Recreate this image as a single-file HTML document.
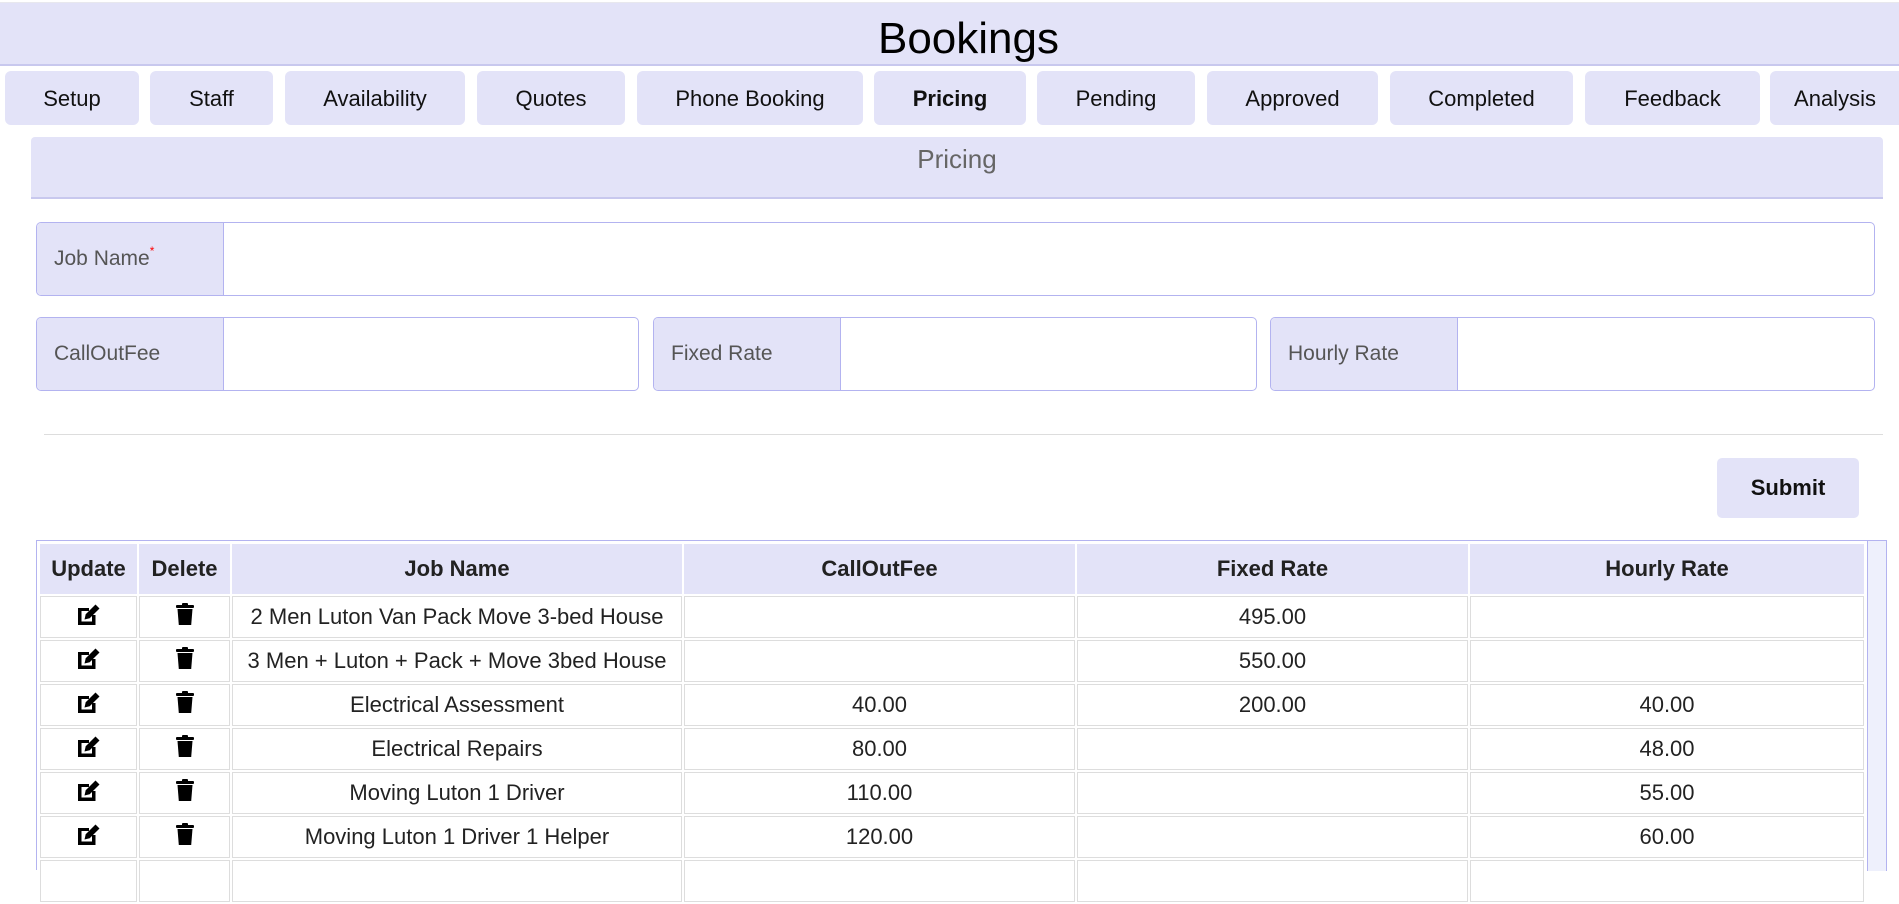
<!DOCTYPE html>
<html><head><meta charset="utf-8"><style>
*{box-sizing:border-box;margin:0;padding:0}
body{width:1899px;height:863px;overflow:hidden;background:#fff;font-family:"Liberation Sans",Arial,sans-serif;position:relative;color:#222}
.hdr{position:absolute;left:0;top:2px;width:1899px;height:64px;background:#e3e3f8;border-bottom:2px solid #c8c8ee;text-align:center;font-size:44px;line-height:72px;color:#000;border-top:1px solid #e8e8ee;padding-left:38px}
.tab{position:absolute;top:71px;height:54px;background:#e3e3f8;border-radius:6px;text-align:center;line-height:56px;font-size:22px;color:#111}
.panel{position:absolute;left:31px;top:137px;width:1852px;height:62px;background:#e3e3f8;border-bottom:2px solid #c8c8ee;text-align:center;font-size:26px;line-height:44px;color:#666;border-radius:4px 4px 0 0}
.grp{position:absolute;border:1.5px solid #b3b3f0;border-radius:5px;overflow:hidden;background:#fff}
.grp .lb{position:absolute;left:0;top:0;bottom:0;width:187px;background:#e3e3f8;border-right:1.5px solid #b3b3f0;font-size:21px;color:#555;padding-left:17px;display:flex;align-items:center}
.hr{position:absolute;left:44px;top:434px;width:1839px;height:1px;background:#ddd}
.btn{position:absolute;left:1717px;top:458px;width:142px;height:60px;background:#e3e3f8;border-radius:5px;text-align:center;line-height:60px;font-size:22px;font-weight:bold;color:#111}
.tw{position:absolute;left:36px;top:540px;width:1851px;height:330px;border:1.5px solid #b3b3f0;border-bottom:none;border-right:none}
.sb{position:absolute;left:1867px;top:541px;width:20px;height:330px;background:#eef0fc;border-left:1.5px solid #b3b3f0;border-right:1.5px solid #b3b3f0}
table{position:absolute;left:38px;top:542px;border-collapse:separate;border-spacing:2px;font-size:22px}
td,th{border:1.5px solid #ddd;text-align:center;height:42px;padding:0}
th{background:#e3e3f8;border-color:#e3e3f8;height:50px;font-weight:bold;color:#222}
td{color:#222}
td svg{display:block;margin:0 auto;position:relative;top:-3px}
</style></head><body>
<div class="hdr">Bookings</div>
<div class="tab" style="left:5px;width:134px">Setup</div>
<div class="tab" style="left:150px;width:123px">Staff</div>
<div class="tab" style="left:285px;width:180px">Availability</div>
<div class="tab" style="left:477px;width:148px">Quotes</div>
<div class="tab" style="left:637px;width:226px">Phone Booking</div>
<div class="tab" style="left:874px;width:152px;font-weight:bold">Pricing</div>
<div class="tab" style="left:1037px;width:158px">Pending</div>
<div class="tab" style="left:1207px;width:171px">Approved</div>
<div class="tab" style="left:1390px;width:183px">Completed</div>
<div class="tab" style="left:1585px;width:175px">Feedback</div>
<div class="tab" style="left:1770px;width:140px;padding-right:10px">Analysis</div>
<div class="panel">Pricing</div>
<div class="grp" style="left:36px;top:222px;width:1839px;height:74px"><div class="lb">Job Name<sup style="color:red;font-size:12px;position:relative;top:-8px">*</sup></div></div>
<div class="grp" style="left:36px;top:317px;width:603px;height:74px"><div class="lb">CallOutFee</div></div>
<div class="grp" style="left:653px;top:317px;width:604px;height:74px"><div class="lb">Fixed Rate</div></div>
<div class="grp" style="left:1270px;top:317px;width:605px;height:74px"><div class="lb">Hourly Rate</div></div>
<div class="hr"></div>
<div class="btn">Submit</div>
<div class="tw"></div>
<div class="sb"></div>
<table>
<colgroup><col style="width:97px"><col style="width:91px"><col style="width:450px"><col style="width:391px"><col style="width:391px"><col style="width:394px"></colgroup>
<tr><th>Update</th><th>Delete</th><th>Job Name</th><th>CallOutFee</th><th>Fixed Rate</th><th>Hourly Rate</th></tr>
<tr><td>E</td><td>T</td><td>2 Men Luton Van Pack Move 3-bed House</td><td></td><td>495.00</td><td></td></tr>
<tr><td>E</td><td>T</td><td>3 Men + Luton + Pack + Move 3bed House</td><td></td><td>550.00</td><td></td></tr>
<tr><td>E</td><td>T</td><td>Electrical Assessment</td><td>40.00</td><td>200.00</td><td>40.00</td></tr>
<tr><td>E</td><td>T</td><td>Electrical Repairs</td><td>80.00</td><td></td><td>48.00</td></tr>
<tr><td>E</td><td>T</td><td>Moving Luton 1 Driver</td><td>110.00</td><td></td><td>55.00</td></tr>
<tr><td>E</td><td>T</td><td>Moving Luton 1 Driver 1 Helper</td><td>120.00</td><td></td><td>60.00</td></tr>
<tr><td></td><td></td><td></td><td></td><td></td><td></td></tr>
</table>
<script>
var e='<svg width="26" height="22" viewBox="0 0 26 22"><path d="M2 5h11v3H5.5v10.5H16V12h3.5v10H2z" fill="#000"/><path d="M8.5 16.5l1.2-5.2L19.5 1.5l4 4-9.8 9.8z" fill="#000"/></svg>';
var t='<svg width="20" height="23" viewBox="0 0 20 23"><rect x="1" y="2" width="18" height="3" rx="1" fill="#000"/><rect x="7" y="0" width="6" height="3" rx="1" fill="#000"/><path d="M2.5 6h15l-1.3 16H3.8z" fill="#000"/></svg>';
document.querySelectorAll('td').forEach(function(c){if(c.textContent==='E')c.innerHTML=e;else if(c.textContent==='T')c.innerHTML=t;});
</script>
</body></html>
